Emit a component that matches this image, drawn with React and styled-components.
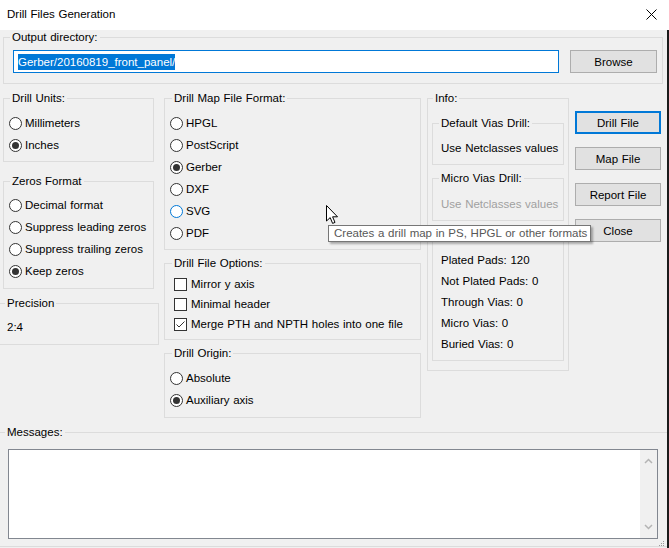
import React from 'react';
import styled, { createGlobalStyle } from 'styled-components';

const units = [
  { label: 'Millimeters' },
  { label: 'Inches', on: true },
];

const zeros = [
  { label: 'Decimal format' },
  { label: 'Suppress leading zeros' },
  { label: 'Suppress trailing zeros' },
  { label: 'Keep zeros', on: true },
];

const mapFormats = [
  { label: 'HPGL' },
  { label: 'PostScript' },
  { label: 'Gerber', on: true },
  { label: 'DXF' },
  { label: 'SVG', hot: true },
  { label: 'PDF' },
];

const fileOptions = [
  { label: 'Mirror y axis' },
  { label: 'Minimal header' },
  { label: 'Merge PTH and NPTH holes into one file', on: true },
];

const origins = [
  { label: 'Absolute' },
  { label: 'Auxiliary axis', on: true },
];

const counts = ['Plated Pads: 120', 'Not Plated Pads: 0', 'Through Vias: 0', 'Micro Vias: 0', 'Buried Vias: 0'];

const Radio = ({ label, on, hot }) => (
  <OptionRow>
    <RadioMark $on={on} $hot={hot} />
    <span>{label}</span>
  </OptionRow>
);

const Check = ({ label, on }) => (
  <OptionRow $h={20} $gap={4}>
    <CheckMark>
      {on && (
        <svg width="11" height="11" viewBox="0 0 11 11">
          <polyline points="1.5,5.5 4,8 9.5,2.5" fill="none" stroke="#333" strokeWidth="1" />
        </svg>
      )}
    </CheckMark>
    <span>{label}</span>
  </OptionRow>
);

function App() {
  return (
    <Window>
      <GlobalStyle />
      <TitleBar>
        <span>Drill Files Generation</span>
        <svg width="11" height="11" viewBox="0 0 11 11">
          <path d="M0.5 0.5 L10.5 10.5 M10.5 0.5 L0.5 10.5" stroke="#000" strokeWidth="1" />
        </svg>
      </TitleBar>

      <Frame>
        <Content>
          <Group $mx="0 4px 0 3px">
            <Legend>Output directory:</Legend>
            <Inner $pad="6px 5px 10px 9px" $row>
              <TextBox>
                <Selected>Gerber/20160819_front_panel/</Selected>
              </TextBox>
              <Button $w={87}>Browse</Button>
            </Inner>
          </Group>

          <MainRow>
            <Column $w={151}>
              <Group>
                <Legend>Drill Units:</Legend>
                <Inner $pad="7px 0 5px 5px">
                  {units.map((u) => <Radio key={u.label} {...u} />)}
                </Inner>
              </Group>
              <Group $mx="12px 0 0 0">
                <Legend>Zeros Format</Legend>
                <Inner $pad="6px 0 6px 5px">
                  {zeros.map((z) => <Radio key={z.label} {...z} />)}
                </Inner>
              </Group>
              <Group $mx="7px -5px 0 -4px">
                <Legend $indent={5}>Precision</Legend>
                <Inner $pad="10px 0 10px 7px">
                  <Line>2:4</Line>
                </Inner>
              </Group>
            </Column>

            <Column $w={257} $ml={10}>
              <Group>
                <Legend $indent={7}>Drill Map File Format:</Legend>
                <Inner $pad="7px 0 5px 5px">
                  {mapFormats.map((f) => <Radio key={f.label} {...f} />)}
                </Inner>
              </Group>
              <Group $mx="6px 0 0 0">
                <Legend $indent={7}>Drill File Options:</Legend>
                <Inner $pad="4px 0 5px 9px">
                  {fileOptions.map((o) => <Check key={o.label} {...o} />)}
                </Inner>
              </Group>
              <Group $mx="6px 0 0 0">
                <Legend $indent={7}>Drill Origin:</Legend>
                <Inner $pad="7px 0 6px 5px">
                  {origins.map((o) => <Radio key={o.label} {...o} />)}
                </Inner>
              </Group>
            </Column>

            <Column $w={142} $ml={6}>
              <Group>
                <Legend $indent={5}>Info:</Legend>
                <Inner $pad="11px 4px 9px 4px">
                  <Group>
                    <Legend>Default Vias Drill:</Legend>
                    <Inner $pad="11px 0 9px 8px">
                      <Line>Use Netclasses values</Line>
                    </Inner>
                  </Group>
                  <Group $mx="6px 0 0 0">
                    <Legend>Micro Vias Drill:</Legend>
                    <Inner $pad="12px 0 9px 8px">
                      <Line $muted>Use Netclasses values</Line>
                    </Inner>
                  </Group>
                  {/* holes count box, its caption is hidden under the tooltip */}
                  <Group $mx="13px 0 0 0">
                    <Inner $pad="15px 0 5px 8px">
                      {counts.map((c) => (
                        <Line key={c} $h={21}>{c}</Line>
                      ))}
                    </Inner>
                  </Group>
                </Inner>
              </Group>
            </Column>

            <ButtonColumn>
              <Button $default>Drill File</Button>
              <Button>Map File</Button>
              <Button>Report File</Button>
              <Button>Close</Button>
            </ButtonColumn>
          </MainRow>

          <Group $mx="7px -6px 0 -1px">
            <Legend $indent={5}>Messages:</Legend>
            <Inner $pad="10px 0 7px 8px">
              <MessageBox>
                <MessageText />
                <ScrollBar>
                  <svg width="9" height="6" viewBox="0 0 9 6">
                    <polyline points="1,5 4.5,1.5 8,5" fill="none" stroke="#b4b4b4" strokeWidth="1.5" />
                  </svg>
                  <svg width="9" height="6" viewBox="0 0 9 6">
                    <polyline points="1,1 4.5,4.5 8,1" fill="none" stroke="#b4b4b4" strokeWidth="1.5" />
                  </svg>
                </ScrollBar>
              </MessageBox>
            </Inner>
          </Group>
        </Content>
        <Edge />
      </Frame>

      {/* hover tip and pointer sit over the dialog */}
      <Tooltip>Creates a drill map in PS, HPGL or other formats</Tooltip>
      <Pointer width="13" height="20" viewBox="0 0 13 20">
        <path d="M0.5 0.5 L0.5 16 L4.2 12.6 L6.6 18.4 L9 17.4 L6.6 11.8 L11.5 11.8 Z" fill="#fff" stroke="#000" strokeWidth="1" />
      </Pointer>
      <Grip width="6" height="6" viewBox="0 0 6 6">
        <rect x="4" y="0" width="1" height="1" fill="#9a9a9a" />
        <rect x="2" y="2" width="1" height="1" fill="#9a9a9a" />
        <rect x="4" y="2" width="1" height="1" fill="#9a9a9a" />
        <rect x="0" y="4" width="1" height="1" fill="#9a9a9a" />
        <rect x="2" y="4" width="1" height="1" fill="#9a9a9a" />
        <rect x="4" y="4" width="1" height="1" fill="#9a9a9a" />
      </Grip>
    </Window>
  );
}

const GlobalStyle = createGlobalStyle`
  html, body {
    margin: 0;
    padding: 0;
    background: #f0f0f0;
  }
  body {
    font-family: "Segoe UI", "Liberation Sans", Arial, sans-serif;
    font-size: 11.5px;
    word-spacing: 0.5px;
    color: #000;
  }
`;

const Window = styled.div`
  position: relative;
  width: 669px;
  height: 548px;
  overflow: hidden;
  display: flex;
  flex-direction: column;
  background: #f0f0f0;
`;

const TitleBar = styled.div`
  flex: none;
  height: 30px;
  box-sizing: border-box;
  padding: 0 12px 2px 7px;
  background: #fff;
  display: flex;
  align-items: center;
  justify-content: space-between;
`;

const Frame = styled.div`
  flex: 1;
  display: flex;
  min-height: 0;
`;

const Content = styled.div`
  flex: 1;
  min-width: 0;
  overflow: hidden;
  display: flex;
  flex-direction: column;
`;

const Edge = styled.div`
  width: 2px;
  background: #1b1b1b;
`;

const Group = styled.fieldset`
  margin: ${(p) => p.$mx || '0'};
  padding: 0;
  min-width: 0;
  border: 1px solid #dcdcdc;
`;

const Legend = styled.legend`
  margin-left: ${(p) => (p.$indent ?? 6)}px;
  padding: 0 2px;
  line-height: 14px;
  height: 14px;
`;

const Inner = styled.div`
  padding: ${(p) => p.$pad};
  display: flex;
  flex-direction: ${(p) => (p.$row ? 'row' : 'column')};
  align-items: ${(p) => (p.$row ? 'center' : 'stretch')};
  gap: ${(p) => (p.$row ? '11px' : '0')};
`;

const TextBox = styled.div`
  width: 546px;
  height: 23px;
  box-sizing: border-box;
  border: 1px solid #0078d7;
  background: #fff;
  padding-left: 4px;
  display: flex;
  align-items: center;
`;

const Selected = styled.span`
  background: #0078d7;
  color: #fff;
  line-height: 16px;
`;

const Button = styled.div`
  width: ${(p) => (p.$w ? `${p.$w}px` : '100%')};
  height: 23px;
  box-sizing: border-box;
  border: ${(p) => (p.$default ? '2px solid #0078d7' : '1px solid #adadad')};
  background: #e1e1e1;
  display: flex;
  align-items: center;
  justify-content: center;
`;

const MainRow = styled.div`
  display: flex;
  align-items: flex-start;
  margin-top: 7px;
  padding-left: 3px;
`;

const Column = styled.div`
  flex: none;
  width: ${(p) => p.$w}px;
  margin-left: ${(p) => p.$ml || 0}px;
  display: flex;
  flex-direction: column;
`;

const ButtonColumn = styled.div`
  flex: none;
  width: 86px;
  margin: 20px 0 0 6px;
  display: flex;
  flex-direction: column;
  gap: 13px;
`;

const OptionRow = styled.div`
  height: ${(p) => p.$h || 22}px;
  display: flex;
  align-items: center;
  gap: ${(p) => p.$gap || 3}px;
  white-space: nowrap;
`;

const RadioMark = styled.span`
  flex: none;
  width: 13px;
  height: 13px;
  box-sizing: border-box;
  border-radius: 50%;
  border: 1px solid ${(p) => (p.$hot ? '#0078d7' : '#333')};
  background: #fff;
  display: flex;
  align-items: center;
  justify-content: center;
  &::after {
    content: '';
    display: ${(p) => (p.$on ? 'block' : 'none')};
    width: 7px;
    height: 7px;
    border-radius: 50%;
    background: #333;
  }
`;

const CheckMark = styled.span`
  flex: none;
  width: 13px;
  height: 13px;
  box-sizing: border-box;
  border: 1px solid #333;
  background: #fff;
  display: flex;
  align-items: center;
  justify-content: center;
`;

const Line = styled.div`
  height: ${(p) => p.$h || 14}px;
  line-height: ${(p) => p.$h || 14}px;
  white-space: nowrap;
  color: ${(p) => (p.$muted ? '#a0a0a0' : '#000')};
`;

const MessageBox = styled.div`
  width: 650px;
  height: 90px;
  box-sizing: border-box;
  border: 1px solid #828790;
  background: #fff;
  display: flex;
`;

const MessageText = styled.div`
  flex: 1;
`;

const ScrollBar = styled.div`
  width: 17px;
  background: #f0f0f0;
  display: flex;
  flex-direction: column;
  align-items: center;
  justify-content: space-between;
  padding: 8px 0 8px;
`;

const Tooltip = styled.div`
  position: absolute;
  left: 328px;
  top: 225px;
  width: 263px;
  height: 17px;
  box-sizing: border-box;
  padding-left: 5px;
  border: 1px solid #767676;
  background: #fff;
  color: #575757;
  line-height: 15px;
  white-space: nowrap;
  box-shadow: 2px 2px 2px rgba(0, 0, 0, 0.3);
`;

const Pointer = styled.svg`
  position: absolute;
  left: 326px;
  top: 205px;
`;

const Grip = styled.svg`
  position: absolute;
  right: 4px;
  bottom: 1px;
`;

export default App;
